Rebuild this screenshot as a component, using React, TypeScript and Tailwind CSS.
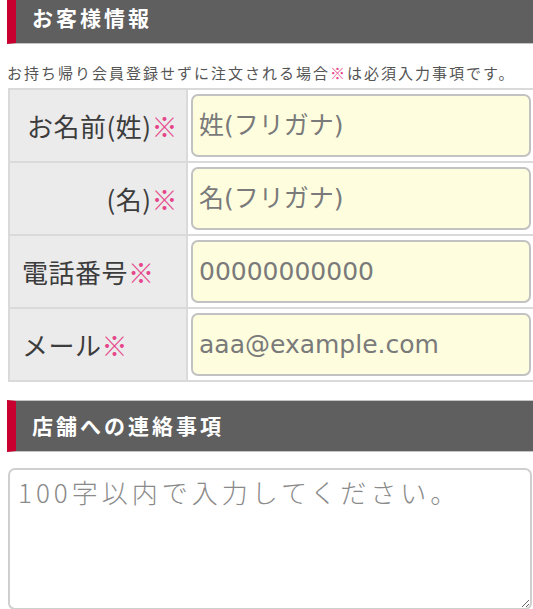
const labelFont = { fontFamily: '"DejaVu Sans", "Noto Sans CJK JP", sans-serif' }
const jpFont = { fontFamily: '"Noto Sans CJK JP", sans-serif' }

function SectionHeader({ title, className = '' }: { title: string; className?: string }) {
  return (
    <div
      className={`flex h-[52px] items-center border border-[#c4c4c4] border-l-[9px] border-l-[#c8002f] bg-[#5f5f5f] pl-[16px] ${className}`}
    >
      <span className="text-[21px] font-bold tracking-[3px] text-white" style={jpFont}>
        {title}
      </span>
    </div>
  )
}

const rows = [
  { label: 'お名前(姓)', placeholder: '姓(フリガナ)', align: 'end' },
  { label: '(名)', placeholder: '名(フリガナ)', align: 'end' },
  { label: '電話番号', placeholder: '00000000000', align: 'start' },
  { label: 'メール', placeholder: 'aaa@example.com', align: 'start' },
]

export default function App() {
  return (
    <div className="h-[609px] w-[533px] overflow-hidden bg-white">
      <div className="w-[540px] pl-[7px]">
        <SectionHeader title="お客様情報" className="-mt-[8px]" />

        <p className="mt-[19px] text-[15px] leading-[20px] tracking-[2px] text-[#555]" style={jpFont}>
          お持ち帰り会員登録せずに注文される場合<span className="text-[#e6458a]">※</span>は必須入力事項です。
        </p>

        <div className="mt-[5px] ml-[1px] border-t-2 border-l-2 border-[#dadada]">
          {rows.map((row) => (
            <div key={row.label} className="grid h-[73px] grid-cols-[178px_1fr] border-b-2 border-[#dadada]">
              <div
                className={`flex items-center border-r-2 border-[#dadada] bg-[#ebebeb] text-[26px] tracking-[0.5px] text-[#3c3c3c] ${
                  row.align === 'end' ? 'justify-end pr-[8px]' : 'justify-start pl-[12px]'
                }`}
                style={jpFont}
              >
                <span>{row.label}</span>
                <span className="text-[#e6458a]">※</span>
              </div>
              <div className="flex items-center bg-white pl-[3px] pr-[9px]">
                <input
                  type="text"
                  placeholder={row.placeholder}
                  className="h-[63px] w-full rounded-[7px] border-2 border-[#c2c2c2] bg-[#fefedf] px-[6px] text-[25px] text-[#333] outline-none placeholder:text-[#7a7a7a]"
                  style={labelFont}
                />
              </div>
            </div>
          ))}
        </div>

        <SectionHeader title="店舗への連絡事項" className="mt-[18px]" />

        <textarea
          placeholder="100字以内で入力してください。"
          className="mt-[16px] ml-[1px] block h-[142px] w-[524px] rounded-[7px] border-2 border-[#cfcfcf] bg-white px-[8px] py-[2px] text-[26px] font-light tracking-[4px] text-[#333] outline-none placeholder:text-[#8a8a8a]"
          style={jpFont}
        />
      </div>
    </div>
  )
}
